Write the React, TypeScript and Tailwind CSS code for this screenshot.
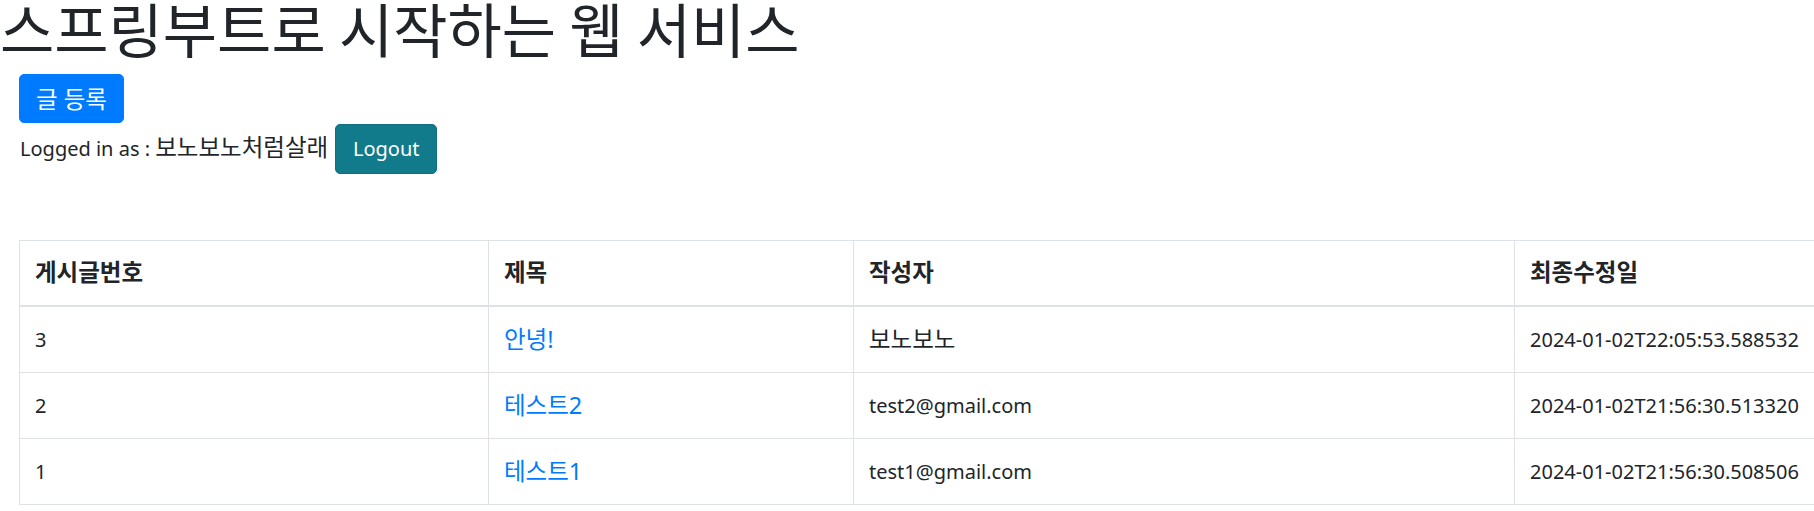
import React from "react";

const Ko = ({ children }: { children: React.ReactNode }) => (
  <span className="text-[23.5px]">{children}</span>
);

const rows = [
  { id: "3", title: "안녕!", author: <Ko>보노보노</Ko>, date: "2024-01-02T22:05:53.588532" },
  { id: "2", title: "테스트2", author: "test2@gmail.com", date: "2024-01-02T21:56:30.513320" },
  { id: "1", title: "테스트1", author: "test1@gmail.com", date: "2024-01-02T21:56:30.508506" },
];

export default function App() {
  return (
    <div
      className="w-full h-[511px] overflow-hidden bg-white text-[#212529] text-[20px] leading-[30px]"
      style={{ fontFamily: '"Noto Sans", "Noto Sans CJK KR", sans-serif' }}
    >
      <h1
        className="m-0 mb-[14px] text-[59px] leading-[56px] font-normal"
        style={{ fontFamily: '"Noto Sans CJK KR", sans-serif' }}
      >
        스프링부트로 시작하는 웹 서비스
      </h1>
      <div className="pl-[19px] pt-[4px]">
        <button className="flex h-[49px] w-[105px] items-center justify-center rounded-[5px] border border-[#007bff] bg-[#007bff] text-white">
          <Ko>글 등록</Ko>
        </button>
        <div className="mt-[1px] flex items-start">
          <span className="mt-[8px] whitespace-nowrap pl-[1px] leading-[30px]">
            Logged in as : <Ko>보노보노처럼살래</Ko>
          </span>
          <button className="ml-[7px] flex h-[50px] w-[102px] items-center justify-center rounded-[5px] border border-[#10707f] bg-[#117a8b] text-white">
            Logout
          </button>
        </div>
        <table className="mt-[66px] w-[1804px] table-fixed border-separate border-spacing-0 border-l border-t border-[#dee2e6]">
          <thead>
            <tr>
              <th className="h-[66px] w-[469px] border-b-2 border-r border-[#dee2e6] px-[15px] py-0 text-left align-middle font-bold">
                <Ko>게시글번호</Ko>
              </th>
              <th className="h-[66px] w-[365px] border-b-2 border-r border-[#dee2e6] px-[15px] py-0 text-left align-middle font-bold">
                <Ko>제목</Ko>
              </th>
              <th className="h-[66px] w-[661px] border-b-2 border-r border-[#dee2e6] px-[15px] py-0 text-left align-middle font-bold">
                <Ko>작성자</Ko>
              </th>
              <th className="h-[66px] border-b-2 border-r border-[#dee2e6] px-[15px] py-0 text-left align-middle font-bold">
                <Ko>최종수정일</Ko>
              </th>
            </tr>
          </thead>
          <tbody>
            {rows.map((r) => (
              <tr key={r.id}>
                <td className="h-[66px] border-b border-r border-[#dee2e6] px-[15px] py-0 align-middle">{r.id}</td>
                <td className="h-[66px] border-b border-r border-[#dee2e6] px-[15px] py-0 align-middle">
                  <a className="text-[#007bff]" href="#">
                    <Ko>{r.title}</Ko>
                  </a>
                </td>
                <td className="h-[66px] border-b border-r border-[#dee2e6] px-[15px] py-0 align-middle">{r.author}</td>
                <td className="h-[66px] border-b border-r border-[#dee2e6] px-[15px] py-0 align-middle whitespace-nowrap">
                  {r.date}
                </td>
              </tr>
            ))}
          </tbody>
        </table>
      </div>
    </div>
  );
}
